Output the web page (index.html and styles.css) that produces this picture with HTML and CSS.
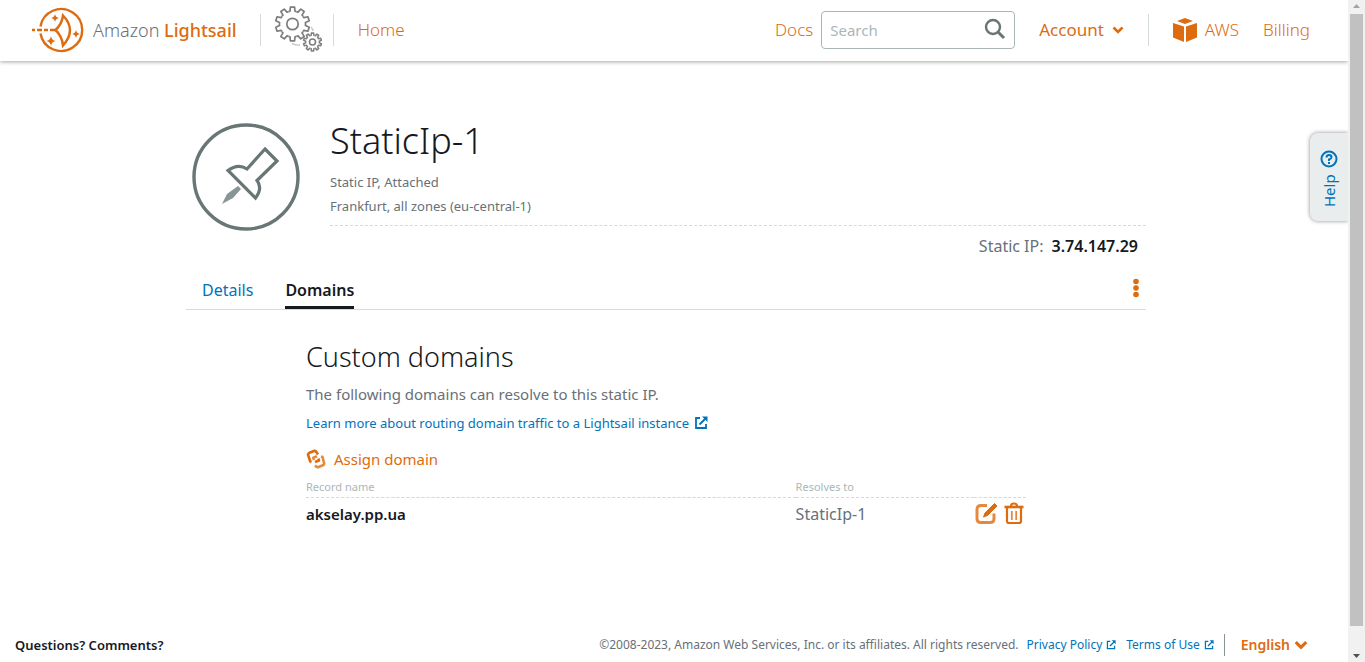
FILE: index.html
```html
<!DOCTYPE html>
<html lang="en">
<head>
<meta charset="utf-8">
<title>StaticIp-1 | Amazon Lightsail</title>
<link rel="stylesheet" href="styles.css">
</head>
<body>
<svg class="defs" aria-hidden="true">
  <defs>
    <path id="tooth" d="M-4-12.4 -2.5-12.8 -2.1-16.9H2.1L2.5-12.8 4-12.4"/>
    <g id="gear">
      <use href="#tooth"/><use href="#tooth" transform="rotate(36)"/><use href="#tooth" transform="rotate(72)"/><use href="#tooth" transform="rotate(108)"/><use href="#tooth" transform="rotate(144)"/><use href="#tooth" transform="rotate(180)"/><use href="#tooth" transform="rotate(216)"/><use href="#tooth" transform="rotate(252)"/><use href="#tooth" transform="rotate(288)"/><use href="#tooth" transform="rotate(324)"/>
      <circle r="5.7"/>
    </g>
    <symbol id="external" viewBox="0 0 14 14"><path d="M6 2H2v10h10V8M5.500 8.500 12 2" fill="none" stroke="currentColor" stroke-width="1.800"/><path d="M8 .500h5.500V6z" fill="currentColor"/></symbol>
    <symbol id="chevron" viewBox="0 0 12 10"><path d="M1.500 2.500 6 7l4.500-4.500" fill="none" stroke="currentColor" stroke-width="2.600"/></symbol>
    <path id="spark" d="M0-4Q.6-.6 4 0 .6.600 0 4-.6.600-4 0-.6-.6 0-4z"/>
  </defs>
</svg>
<div class="app">
  <header class="header">
    <a class="brand" href="#">
      <svg class="logo" viewBox="0 0 54 46" aria-hidden="true">
        <g fill="none" stroke="currentColor" stroke-width="2.400">
          <path d="M9.500 19.500A21 21 0 1 1 9.500 26.500"/>
          <path d="M1 23h3M6 23h5M13 23h4M19 23h6"/>
          <path d="M32 8.500Q46 23 32 38.500 31 29 24.500 23 31 17 32 8.500z"/>
        </g>
        <g fill="currentColor"><use href="#spark" x="24" y="11"/><use href="#spark" transform="translate(20 34) scale(1.200)"/><use href="#spark" x="45" y="27"/></g>
      </svg>
      <span class="brand-name">Amazon <strong>Lightsail</strong></span>
    </a>
    <a class="gears" href="#" aria-label="Settings">
      <svg viewBox="0 0 50 48" width="50" height="48" fill="none" stroke="#7d7d7d" stroke-linejoin="round">
        <use href="#gear" transform="translate(20.500 18)" stroke-width="1.700"/>
        <use href="#gear" transform="translate(40.500 36) scale(.53)" stroke-width="2.900"/>
        <path d="M20 37.500q4 2 8 1.500M39 21q2 2 2 4" stroke="#c6caca" stroke-width="1.400"/>
      </svg>
    </a>
    <nav class="nav-left"><a href="#">Home</a></nav>
    <nav class="nav-right">
      <a href="#">Docs</a>
      <form class="search" role="search">
        <input type="search" placeholder="Search" aria-label="Search">
        <button type="button" aria-label="Submit search"><svg viewBox="0 0 22 22" width="22" height="22" fill="none" stroke="#687675"><circle cx="9" cy="9" r="7" stroke-width="2.400"/><path d="M14 14l6 6" stroke-width="3"/></svg></button>
      </form>
      <button class="account" type="button">Account <svg width="12" height="10"><use href="#chevron"/></svg></button>
      <a class="aws" href="#"><svg viewBox="0 0 24 26" width="24" height="26" fill="currentColor" aria-hidden="true"><path d="M4 4 12 1l8 3-8 3zM0 6l11 3.500V25L0 20.500zM24 6 13 9.500V25l11-4.500z"/></svg>AWS</a>
      <a class="billing" href="#">Billing</a>
    </nav>
  </header>

  <main class="main">
    <section class="resource">
      <svg class="pin" viewBox="0 0 108 108" aria-hidden="true">
        <circle cx="54" cy="54" r="52" fill="none" stroke="#687675" stroke-width="3.400"/>
        <path d="M73 26 85 38 65 57.500Q71 65 63.500 75L36 47.500Q46 40 55 46z" fill="none" stroke="#687675" stroke-width="3.200"/>
        <path d="M46 63l3 3-8 9-11 6 5-10z" fill="#879596"/>
      </svg>
      <div class="summary">
        <h1>StaticIp-1</h1>
        <p>Static IP, Attached</p>
        <p>Frankfurt, all zones (eu-central-1)</p>
        <dl class="ip"><dt>Static IP:</dt><dd>3.74.147.29</dd></dl>
      </div>
    </section>

    <nav class="tabs">
      <a href="#">Details</a>
      <a class="active" href="#" aria-current="page">Domains</a>
      <button type="button" aria-label="More actions"><svg viewBox="0 0 6 20" width="6" height="20" fill="currentColor"><circle cx="3" cy="3.500" r="2.800"/><circle cx="3" cy="10" r="2.800"/><circle cx="3" cy="16.500" r="2.800"/></svg></button>
    </nav>

    <section class="domains">
      <h2>Custom domains</h2>
      <p>The following domains can resolve to this static IP.</p>
      <a class="learn" href="#">Learn more about routing domain traffic to a Lightsail instance<svg width="14" height="14"><use href="#external"/></svg></a>
      <button class="assign" type="button">
        <svg viewBox="0 0 20 20" width="20" height="20" fill="none" stroke="currentColor" stroke-width="2.600" stroke-linejoin="round" aria-hidden="true"><path d="M5.500 13 4.200 12.300 2 5.500 3 4 8.500 1.800 10 2.500 12 5.500"/><path d="M12.500 9.500 13 11.500 9 13"/><path d="M15 7.500 16.500 8 18.200 14.500 17.500 16 12 18.200 10.500 17.800 9 16.500M8 11 7.300 8.800 11 7.200" opacity=".8"/></svg>
        Assign domain
      </button>
      <table>
        <thead><tr><th class="col-name">Record name</th><th class="col-target">Resolves to</th><th class="col-actions" aria-label="Actions"></th></tr></thead>
        <tbody><tr>
          <td class="record">akselay.pp.ua</td><td class="target">StaticIp-1</td>
          <td class="actions"><div>
            <button type="button" aria-label="Edit"><svg viewBox="0 0 24 24" width="24" height="24" fill="none" stroke="currentColor"><path d="M13 3.500H7Q3 3.500 3 7.500v9q0 4 4 4h9q4 0 4-4v-5" stroke-width="3" opacity=".8"/><path d="M9.500 15l1.500-4L20.500 1.500 23 4 13.500 13.500z" stroke-width="1" fill="currentColor"/></svg></button>
            <button type="button" aria-label="Delete"><svg viewBox="0 0 20 24" width="20" height="24" fill="none" stroke="currentColor"><path d="M.500 5h19" stroke-width="2.600"/><path d="M7 4q0-2.500 3-2.500T13 4M3 6v13q0 2 2 2h10q2 0 2-2V6" stroke-width="2.200"/><path d="M7.800 9v9M12.200 9v9" stroke-width="1.800" opacity=".8"/></svg></button>
          </div></td>
        </tr></tbody>
      </table>
    </section>
  </main>

  <footer class="footer">
    <a class="feedback" href="#">Questions? Comments?</a>
    <div class="legal">
      <span>©2008-2023, Amazon Web Services, Inc. or its affiliates. All rights reserved.</span>
      <a href="#">Privacy Policy<svg width="10" height="10"><use href="#external"/></svg></a>
      <a href="#">Terms of Use<svg width="10" height="10"><use href="#external"/></svg></a>
      <button type="button">English <svg width="14" height="12"><use href="#chevron"/></svg></button>
    </div>
  </footer>
  <button class="help" type="button"><span>Help</span><svg viewBox="0 0 18 18" width="18" height="18" fill="none" stroke="currentColor" stroke-width="2" aria-hidden="true"><circle cx="9" cy="9" r="7.500"/><path d="M6.500 7.500Q6.500 5 9 5t2.500 2.200Q11.500 8.500 9 9.500V11M9 12v2"/></svg></button>
</div>
<div class="scrollbar" aria-hidden="true">
  <svg viewBox="0 0 17 14" width="17" height="14"><path d="M5 8l3.500-4L12 8z" fill="#a3a3a3"/></svg>
  <div class="thumb"></div>
  <svg viewBox="0 0 17 36" width="17" height="36"><path d="M5 28h7l-3.500 4z" fill="#505050"/></svg>
</div>
</body>
</html>
```
FILE: styles.css
```css
* { box-sizing: border-box; }
body {
  margin: 0;
  display: flex;
  min-height: 100vh;
  background: #fff;
  color: #687078;
  font: 15px/24px "Noto Sans", "Open Sans", sans-serif;
}
h1, h2, p, dl, dd { margin: 0; }
a { color: #0073bb; text-decoration: none; }
button { border: 0; padding: 0; background: none; color: #dd6b10; font: inherit; cursor: pointer; }
svg { flex: none; }
.defs { position: absolute; width: 0; height: 0; }

.app { position: relative; flex: 1; min-width: 0; display: flex; flex-direction: column; }

.header {
  display: flex;
  align-items: center;
  height: 61px;
  padding: 0 38px 2px 31px;
  box-shadow: 0 1px 4px rgba(0, 0, 0, .35);
  font-size: 17px;
  font-weight: 300;
}
.header a, .account { display: flex; align-items: center; color: #dd6b10; white-space: nowrap; }
.brand { gap: 8px; }
.logo { width: 54px; height: 46px; }
.brand-name { color: #687078; font-size: 18px; }
.brand-name strong { color: #dd6b10; font-weight: 500; }
.gears { height: 32px; margin-left: 23px; padding: 0 11px; border: solid #d5dbdb; border-width: 0 1px; }
.nav-left { margin-left: 24px; }
.nav-right { display: flex; align-items: center; margin-left: auto; }
.search { display: flex; align-items: center; width: 194px; height: 38px; margin: 0 24px 0 8px; padding: 0 8px; border: 1px solid #aab7b8; border-radius: 4px; }
.search input { flex: 1; min-width: 0; border: 0; padding: 0; outline: 0; background: none; color: #16191f; font: 400 15px/24px "Noto Sans", sans-serif; }
.search input::placeholder { color: #aab7b8; opacity: 1; }
.search button { height: 24px; }
.account { gap: 8px; font-weight: 400; }
.aws { gap: 8px; height: 32px; margin-left: 24px; padding-left: 24px; border-left: 1px solid #d5dbdb; }
.billing { margin-left: 24px; }

.main { flex: 1; width: 100%; max-width: 976px; margin: 0 auto; padding: 56px 16px 0 0; }
.resource { display: flex; gap: 30px; padding-left: 6px; }
.pin { width: 108px; height: 108px; margin-top: 6px; }
.summary { flex: 1; font-size: 13px; }
h1 { margin-bottom: 5px; color: #16191f; font-size: 36px; line-height: 48px; font-weight: 300; }
.ip { display: flex; justify-content: flex-end; gap: 8px; margin-top: 7px; padding: 8px 8px 0 0; border-top: 1px dashed #d5dbdb; font-size: 16px; }
.ip dd { color: #16191f; font-weight: 600; }
.tabs { display: flex; gap: 32px; height: 46px; margin-top: 6px; padding: 0 7px 0 16px; border-bottom: 1px solid #d5dbdb; align-items: flex-end; font-size: 16px; }
.tabs a { height: 31px; }
.tabs .active { color: #16191f; font-weight: 600; border-bottom: 3px solid #16191f; }
.tabs button { height: 31px; margin-left: auto; display: flex; align-items: flex-start; }
.domains { padding: 27px 120px 0; }
h2 { margin-bottom: 5px; color: #16191f; font-size: 27px; line-height: 40px; font-weight: 300; }
.learn { display: flex; align-items: center; gap: 5px; margin-top: 5px; font-size: 13px; }
.assign { display: flex; align-items: center; gap: 8px; margin-top: 12px; }
table { width: 100%; margin-top: 6px; border-collapse: collapse; table-layout: fixed; }
th { padding: 0; color: #aab7b8; border-bottom: 1px dashed #d5dbdb; font-size: 11px; line-height: 20px; font-weight: 400; text-align: left; }
td { padding: 4px 0; }
.col-name { width: 68%; }
.col-actions { width: 52px; }
.record { color: #16191f; font-weight: 600; }
.target { font-size: 16px; }
.actions div { display: flex; gap: 6px; justify-content: flex-end; padding-right: 2px; }
.actions button { height: 24px; }

.footer { display: flex; align-items: center; justify-content: space-between; padding: 0 40px 5px 15px; font-size: 12px; white-space: nowrap; }
.feedback { color: #16191f; font-size: 13px; font-weight: 600; }
.legal { display: flex; align-items: center; }
.legal a { display: flex; align-items: center; gap: 4px; margin-left: 8px; }
.legal a + a { margin-left: 10px; }
.legal button { display: flex; align-items: center; gap: 4px; height: 22px; margin-left: 10px; padding-left: 16px; border-left: 1px solid #879596; font-size: 14px; font-weight: 600; }

.help {
  position: absolute;
  top: 133px;
  right: 0;
  display: flex;
  align-items: center;
  gap: 6px;
  height: 88px;
  width: 38px;
  padding: 14px 10px;
  writing-mode: vertical-rl;
  transform: rotate(180deg);
  border-radius: 0 8px 8px 0;
  background: #eaeded;
  box-shadow: 0 0 4px rgba(0, 0, 0, .45);
  color: #0073bb;
}
.help svg { transform: rotate(180deg); }

.scrollbar { position: relative; display: flex; flex-direction: column; width: 17px; background: #f1f1f1; }
.scrollbar svg { display: block; }
.thumb { flex: 1; margin: 0 2px; background: #c1c1c1; }
```
